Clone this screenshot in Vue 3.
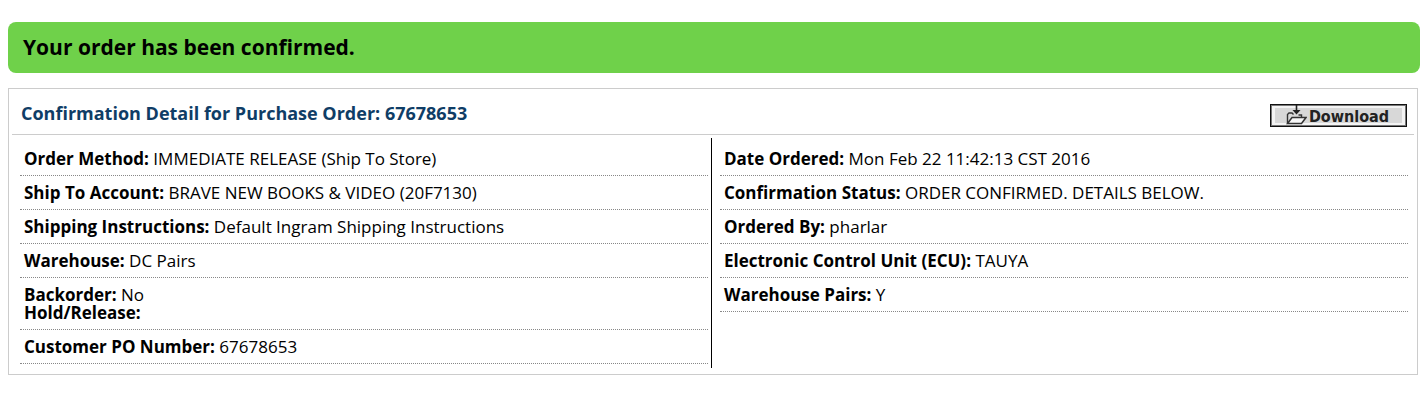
<script setup>
const columns = [
  [
    [{ label: 'Order Method:', value: 'IMMEDIATE RELEASE (Ship To Store)' }],
    [{ label: 'Ship To Account:', value: 'BRAVE NEW BOOKS & VIDEO (20F7130)' }],
    [{ label: 'Shipping Instructions:', value: 'Default Ingram Shipping Instructions' }],
    [{ label: 'Warehouse:', value: 'DC Pairs' }],
    [{ label: 'Backorder:', value: 'No' }, { label: 'Hold/Release:', value: '' }],
    [{ label: 'Customer PO Number:', value: '67678653' }],
  ],
  [
    [{ label: 'Date Ordered:', value: 'Mon Feb 22 11:42:13 CST 2016' }],
    [{ label: 'Confirmation Status:', value: 'ORDER CONFIRMED. DETAILS BELOW.' }],
    [{ label: 'Ordered By:', value: 'pharlar' }],
    [{ label: 'Electronic Control Unit (ECU):', value: 'TAUYA' }],
    [{ label: 'Warehouse Pairs:', value: 'Y' }],
  ],
]
</script>

<template>
  <main class="page">
    <div class="banner" role="status">Your order has been confirmed.</div>
    <section class="panel">
      <header class="panel-head">
        <h1 class="title">Confirmation Detail for Purchase Order: 67678653</h1>
        <button class="download" type="button">
          <svg class="icon" viewBox="0 0 21 21" aria-hidden="true">
            <path d="M1.5 18V9.5L3 8H6L7.5 9.5" fill="none" stroke="#333" stroke-width="1.4" />
            <path d="M12.5 10H15.5V12.5" fill="none" stroke="#333" stroke-width="1.4" />
            <path d="M1.5 18.5L6 12.5H20L15.5 18.5Z" fill="#f6f6f6" stroke="#333" stroke-width="1.5" />
            <path d="M10.5 0V7" stroke="#222" stroke-width="1.6" />
            <path d="M6.5 5H14.5L10.5 9.5Z" fill="#222" />
          </svg>
          <span>Download</span>
        </button>
      </header>
      <div class="columns">
        <div v-for="(rows, c) in columns" :key="c" class="column">
          <div v-for="(row, r) in rows" :key="r" class="row">
            <div v-for="item in row" :key="item.label">
              <strong>{{ item.label }}</strong> {{ item.value }}
            </div>
          </div>
        </div>
      </div>
    </section>
  </main>
</template>

<style>
body {
  background: #fff;
}
</style>

<style scoped>
.page {
  padding: 22px 7px 22px 8px;
  color: #000;
  font: 17px/18px "Open Sans", "Noto Sans", sans-serif;
}
.banner {
  padding: 11px 15px 12px;
  border-radius: 8px;
  background: #6fd14a;
  font-size: 21px;
  line-height: 28px;
  font-weight: 700;
}
.panel {
  margin: 15px 2px 0 0;
  padding: 3px 3px 6px;
  border: 1px solid #ccc;
}
.panel-head {
  display: flex;
  align-items: center;
  justify-content: space-between;
  padding: 6px 7px 6px 9px;
  border-bottom: 1px solid #ccc;
}
.title {
  margin: 0;
  color: #0f3d66;
  font-size: 18px;
  line-height: 30px;
}
.download {
  display: flex;
  align-items: center;
  justify-content: center;
  gap: 2px;
  width: 137px;
  height: 23px;
  margin-top: 4px;
  padding: 0 2px 0 0;
  border: 1px solid #111;
  border-radius: 0;
  background: #d8d8d8;
  box-shadow: inset 0 0 0 1px #777, inset 4px 3px #f4f4f4, inset -4px -3px #f4f4f4;
  color: #222;
  font: 700 16px/21px "DejaVu Sans Condensed", "DejaVu Sans", sans-serif;
}
.download span {
  padding-top: 2px;
}
.icon {
  width: 21px;
  height: 21px;
}
.columns {
  display: grid;
  grid-template-columns: calc(50% - 1px) 1fr;
  padding-top: 3px;
}
.column {
  padding: 4px 6px 4px 8px;
}
.column:first-child {
  padding-right: 3px;
  border-right: 1px solid #000;
}
.row {
  padding: 8px 4px 7px;
  border-bottom: 1px dotted #888;
}
</style>
